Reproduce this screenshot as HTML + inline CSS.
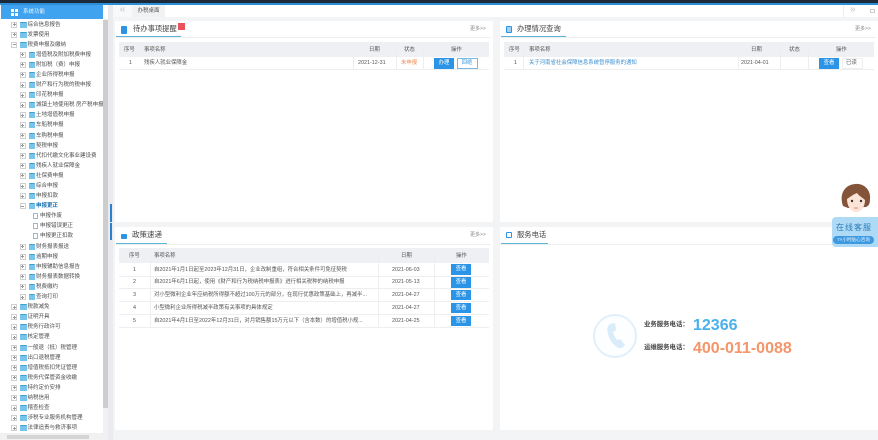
<!DOCTYPE html>
<html lang="zh" style="background:#f3f4f5"><head><meta charset="utf-8"><title>办税桌面</title>
<style>
*{box-sizing:border-box}
html,body{margin:0;padding:0;width:878px;height:440px;overflow:hidden;background:#f3f4f5;font-family:"Liberation Sans","Noto Sans CJK SC",sans-serif;color:#555}
#w{position:absolute;left:0;top:0;width:878px;height:440px;overflow:hidden;filter:blur(.25px)}
.a{position:absolute}
#tree{position:absolute;left:0;top:19.5px;width:103px;height:413px;background:#fff;overflow:hidden}
.r{position:relative;height:10.1px;font-size:5.5px;line-height:10.1px;white-space:nowrap;color:#4d4d4d}
.r i{position:absolute;top:2px;width:6px;height:6px;border:1px solid #cfcfcf;background:#fff}
.r i:after{content:"";position:absolute;left:.5px;top:1.5px;width:3px;height:1px;background:#999}
.r i:before{content:"";position:absolute;left:1.5px;top:.5px;width:1px;height:3px;background:#999}
.r.o i:before{display:none}
.r b{position:absolute;top:2px;width:6.5px;height:6px;background:#78c4ea;border-radius:1px 1px 0 0;border-top:1px solid #3f9fd2}
.r u{position:absolute;top:2px;width:5px;height:6px;border:1px solid #9fb6cc;background:#fff}
.r span{position:absolute;top:0}
.l1 i{left:11px}.l1 b{left:20px}.l1 span{left:27.5px}
.l2 i{left:19.5px}.l2 b{left:28.5px}.l2 span{left:36px}
.l3 u{left:33px}.l3 span{left:40px}
.panel{position:absolute;background:#fff}
.t{position:absolute;font-size:7.3px;line-height:10px;color:#444;white-space:nowrap}
.ul{position:absolute;height:1.5px;background:#5db4d8}
.more{position:absolute;font-size:5px;color:#888;line-height:8px}
.hd{position:absolute;background:#eef0f3}
.c{position:absolute;font-size:5.4px;line-height:8px;color:#555;white-space:nowrap}
.ln{position:absolute;background:#eceef0}
.btn{position:absolute;font-size:5.4px;color:#fff;background:#2b94e6;text-align:center;height:10.5px;line-height:10.5px;width:20px}
.ico{position:absolute;width:6px;height:7px;border-radius:1px;background:#2b94e6}
</style></head><body><div id="w">
<div class="a" style="left:0;top:0;width:878px;height:3px;background:#1d2a3a"></div>
<div class="a" style="left:0;top:3px;width:878px;height:1.5px;background:#2a8fd6"></div>

<div class="a" style="left:113px;top:4.5px;width:765px;height:12.5px;background:#fff"></div>
<div class="a" style="left:113px;top:4.5px;width:19px;height:12.5px;background:#f8f9fa;font-size:10px;color:#c4c4c4;text-align:center;line-height:10px">«</div>
<div class="a" style="left:132px;top:4.5px;width:33px;height:12.5px;background:#f1f2f3;font-size:5.5px;color:#555;text-align:center;line-height:12.5px">办税桌面</div>
<div class="a" style="left:843px;top:4.5px;width:1px;height:12.5px;background:#eee"></div>
<div class="a" style="left:850px;top:4.5px;font-size:10px;color:#c4c4c4;line-height:10px">»</div>
<div class="a" style="left:870px;top:9px;width:5px;height:4px;border:1px solid #ccc"></div>

<!-- sidebar -->
<div class="a" style="left:0;top:4.5px;width:108px;height:436px;background:#fff"></div>
<div class="a" style="left:1px;top:5px;width:102px;height:14px;background:#3fa3f0"></div>
<div class="a" style="left:11px;top:8.5px;width:3px;height:3px;background:#fff"></div>
<div class="a" style="left:15px;top:8.5px;width:3px;height:3px;background:#fff"></div>
<div class="a" style="left:11px;top:12.5px;width:3px;height:3px;background:#fff"></div>
<div class="a" style="left:15px;top:12.5px;width:3px;height:3px;background:#fff"></div>
<div class="a" style="left:23px;top:7px;font-size:5.5px;line-height:10px;color:#e8f4fd">系统功能</div>
<div id="tree">
<div class="r l1"><i></i><b></b><span>综合信息报告</span></div>
<div class="r l1"><i></i><b></b><span>发票使用</span></div>
<div class="r l1 o"><i></i><b></b><span>税费申报及缴纳</span></div>
<div class="r l2"><i></i><b></b><span>增值税及附加税费申报</span></div>
<div class="r l2"><i></i><b></b><span>附加税（费）申报</span></div>
<div class="r l2"><i></i><b></b><span>企业所得税申报</span></div>
<div class="r l2"><i></i><b></b><span>财产和行为税的税申报</span></div>
<div class="r l2"><i></i><b></b><span>印花税申报</span></div>
<div class="r l2"><i></i><b></b><span>城镇土地使用税 房产税申报</span></div>
<div class="r l2"><i></i><b></b><span>土地增值税申报</span></div>
<div class="r l2"><i></i><b></b><span>车船税申报</span></div>
<div class="r l2"><i></i><b></b><span>车购税申报</span></div>
<div class="r l2"><i></i><b></b><span>契税申报</span></div>
<div class="r l2"><i></i><b></b><span>代扣代缴文化事业建设费</span></div>
<div class="r l2"><i></i><b></b><span>残疾人就业保障金</span></div>
<div class="r l2"><i></i><b></b><span>社保费申报</span></div>
<div class="r l2"><i></i><b></b><span>综合申报</span></div>
<div class="r l2"><i></i><b></b><span>申报扣款</span></div>
<div class="r l2 o"><i></i><b></b><span style="color:#1a6fb0;font-weight:bold">申报更正</span></div>
<div class="r l3"><u></u><span>申报作废</span></div>
<div class="r l3"><u></u><span>申报错误更正</span></div>
<div class="r l3"><u></u><span>申报更正扣款</span></div>
<div class="r l2"><i></i><b></b><span>财务报表报送</span></div>
<div class="r l2"><i></i><b></b><span>逾期申报</span></div>
<div class="r l2"><i></i><b></b><span>申报辅助信息报告</span></div>
<div class="r l2"><i></i><b></b><span>财务报表数据转换</span></div>
<div class="r l2"><i></i><b></b><span>税费缴约</span></div>
<div class="r l2"><i></i><b></b><span>查询打印</span></div>
<div class="r l1"><i></i><b></b><span>税款减免</span></div>
<div class="r l1"><i></i><b></b><span>证明开具</span></div>
<div class="r l1"><i></i><b></b><span>税务行政许可</span></div>
<div class="r l1"><i></i><b></b><span>核定管理</span></div>
<div class="r l1"><i></i><b></b><span>一般退（抵）税管理</span></div>
<div class="r l1"><i></i><b></b><span>出口退税管理</span></div>
<div class="r l1"><i></i><b></b><span>增值税抵扣凭证管理</span></div>
<div class="r l1"><i></i><b></b><span>税务代保管资金收缴</span></div>
<div class="r l1"><i></i><b></b><span>特约定价安排</span></div>
<div class="r l1"><i></i><b></b><span>纳税信用</span></div>
<div class="r l1"><i></i><b></b><span>稽查检查</span></div>
<div class="r l1"><i></i><b></b><span>涉税专业服务机构管理</span></div>
<div class="r l1"><i></i><b></b><span>法律追责与救济事项</span></div>
</div>
<div class="a" style="left:103px;top:19px;width:5px;height:414px;background:#f1f1f1"></div>
<div class="a" style="left:103px;top:20px;width:5px;height:388px;background:#cdcdcd"></div>
<div class="a" style="left:0;top:433px;width:108px;height:7px;background:#f1f1f1"></div>
<div class="a" style="left:7px;top:434.5px;width:82px;height:4px;background:#d4d4d4"></div>
<div class="a" style="left:108px;top:4.5px;width:5px;height:436px;background:#e9ebee"></div>
<div class="a" style="left:110px;top:204px;width:2px;height:18px;background:#2b7fd0"></div>
<div class="a" style="left:110px;top:223px;width:2px;height:17px;background:#2b7fd0"></div>

<!-- panel 1 -->
<div class="panel" style="left:115px;top:21px;width:378px;height:201px"></div>
<div class="ico" style="left:121px;top:26px;height:8px"></div>
<div class="t" style="left:133px;top:24px">待办事项提醒</div>
<div class="a" style="left:178px;top:23px;width:7px;height:7px;background:#e8525a"></div>
<div class="ul" style="left:116px;top:36px;width:65px"></div>
<div class="a" style="left:116px;top:37px;width:375px;height:.5px;background:#eee"></div>
<div class="more" style="left:470px;top:25px">更多&gt;&gt;</div>
<div class="hd" style="left:119px;top:42px;width:370px;height:15px"></div>
<div class="ln" style="left:119px;top:69px;width:370px;height:1px"></div>
<div class="ln" style="left:353px;top:42px;width:1px;height:27px"></div>
<div class="ln" style="left:396px;top:42px;width:1px;height:27px"></div>
<div class="ln" style="left:423px;top:42px;width:1px;height:27px"></div>
<div class="c" style="left:124px;top:46px">序号</div>
<div class="c" style="left:144px;top:46px">事项名称</div>
<div class="c" style="left:369px;top:46px">日期</div>
<div class="c" style="left:404px;top:46px">状态</div>
<div class="c" style="left:451px;top:46px">操作</div>
<div class="c" style="left:129px;top:59px">1</div>
<div class="c" style="left:144px;top:59px">残疾人就业保障金</div>
<div class="c" style="left:358px;top:59px">2021-12-31</div>
<div class="c" style="left:401px;top:59px;color:#ef8a4c">未申报</div>
<div class="btn" style="left:434px;top:58px">办理</div>
<div class="btn" style="left:456.5px;top:57.5px;width:21px;height:11.5px;background:#fff;border:1px solid #7cb9df;color:#3b9ae0;line-height:9.5px">回绝</div>

<!-- panel 2 -->
<div class="panel" style="left:500px;top:21px;width:378px;height:201px"></div>
<div class="ico" style="left:506px;top:26px;height:7px;border:1.5px solid #2b94e6;background:#9fd2f2"></div>
<div class="t" style="left:517px;top:24px">办理情况查询</div>
<div class="ul" style="left:501px;top:36px;width:65px"></div>
<div class="a" style="left:501px;top:37px;width:375px;height:.5px;background:#eee"></div>
<div class="more" style="left:855px;top:25px">更多&gt;&gt;</div>
<div class="hd" style="left:504px;top:42px;width:370px;height:15px"></div>
<div class="ln" style="left:504px;top:69px;width:370px;height:1px"></div>
<div class="ln" style="left:523px;top:42px;width:1px;height:27px"></div>
<div class="ln" style="left:738px;top:42px;width:1px;height:27px"></div>
<div class="ln" style="left:780px;top:42px;width:1px;height:27px"></div>
<div class="ln" style="left:808px;top:42px;width:1px;height:27px"></div>
<div class="c" style="left:509px;top:46px">序号</div>
<div class="c" style="left:529px;top:46px">事项名称</div>
<div class="c" style="left:751px;top:46px">日期</div>
<div class="c" style="left:789px;top:46px">状态</div>
<div class="c" style="left:836px;top:46px">操作</div>
<div class="c" style="left:514px;top:59px">1</div>
<div class="c" style="left:529px;top:59px;color:#3d8fd0">关于河南省社会保障信息系统暂停服务的通知</div>
<div class="c" style="left:741px;top:59px">2021-04-01</div>
<div class="btn" style="left:819px;top:58px">查看</div>
<div class="c" style="left:846px;top:59px">已读</div>
<div class="a" style="left:842px;top:58px;width:21px;height:11px;border:1px solid #eee"></div>

<!-- panel 3 -->
<div class="panel" style="left:115px;top:227px;width:378px;height:203px"></div>
<div class="a" style="left:121px;top:234px;width:6px;height:5px;background:#2b94e6;border-radius:1px"></div>
<div class="t" style="left:132px;top:230px;font-size:7.5px">政策速递</div>
<div class="ul" style="left:116px;top:242.5px;width:51px"></div>
<div class="a" style="left:116px;top:243.5px;width:375px;height:.5px;background:#eee"></div>
<div class="more" style="left:470px;top:231px">更多&gt;&gt;</div>
<div class="hd" style="left:119px;top:248px;width:370px;height:15px"></div>
<div class="ln" style="left:150px;top:248px;width:1px;height:79px"></div>
<div class="ln" style="left:378px;top:248px;width:1px;height:79px"></div>
<div class="ln" style="left:434px;top:248px;width:1px;height:79px"></div>
<div class="ln" style="left:119px;top:275.5px;width:370px;height:1px"></div>
<div class="ln" style="left:119px;top:288.3px;width:370px;height:1px"></div>
<div class="ln" style="left:119px;top:301.1px;width:370px;height:1px"></div>
<div class="ln" style="left:119px;top:314px;width:370px;height:1px"></div>
<div class="ln" style="left:119px;top:327px;width:370px;height:1px"></div>
<div class="c" style="left:129px;top:252px">序号</div>
<div class="c" style="left:154px;top:252px">事项名称</div>
<div class="c" style="left:401px;top:252px">日期</div>
<div class="c" style="left:456px;top:252px">操作</div>

<div class="c" style="left:133px;top:265.5px">1</div>
<div class="c" style="left:154px;top:265.5px">自2021年1月1日起至2023年12月31日，企业改制重组，符合相关条件可免征契税</div>
<div class="c" style="left:392px;top:265.5px">2021-06-03</div>
<div class="btn" style="left:451px;top:264px">查看</div>

<div class="c" style="left:133px;top:278.3px">2</div>
<div class="c" style="left:154px;top:278.3px">自2021年6月1日起，使用《财产和行为税纳税申报表》进行相关税种的纳税申报</div>
<div class="c" style="left:392px;top:278.3px">2021-05-13</div>
<div class="btn" style="left:451px;top:277px">查看</div>

<div class="c" style="left:133px;top:291px">3</div>
<div class="c" style="left:154px;top:291px">对小型微利企业年应纳税所得额不超过100万元的部分，在现行优惠政策基础上，再减半...</div>
<div class="c" style="left:392px;top:291px">2021-04-27</div>
<div class="btn" style="left:451px;top:289.5px">查看</div>

<div class="c" style="left:133px;top:304px">4</div>
<div class="c" style="left:154px;top:304px">小型微利企业所得税减半政策有关事项的具体规定</div>
<div class="c" style="left:392px;top:304px">2021-04-27</div>
<div class="btn" style="left:451px;top:302.5px">查看</div>

<div class="c" style="left:133px;top:316.5px">5</div>
<div class="c" style="left:154px;top:316.5px">自2021年4月1日至2022年12月31日，对月销售额15万元以下（含本数）的增值税小规...</div>
<div class="c" style="left:392px;top:316.5px">2021-04-25</div>
<div class="btn" style="left:451px;top:315.5px">查看</div>

<!-- panel 4 -->
<div class="panel" style="left:500px;top:227px;width:378px;height:203px"></div>
<div class="a" style="left:506px;top:232px;width:6px;height:6px;border:1.5px solid #2b94e6;border-radius:1px"></div>
<div class="t" style="left:517px;top:230px">服务电话</div>
<div class="ul" style="left:501px;top:242.5px;width:47px"></div>
<div class="a" style="left:501px;top:243.5px;width:375px;height:.5px;background:#eee"></div>
<svg class="a" style="left:592px;top:313px" width="46" height="46" viewBox="0 0 46 46"><circle cx="23" cy="23" r="21" fill="#fcfeff" stroke="#e2f0fa" stroke-width="2"/><path d="M18 11c-4 3-3 9 0 15s8 10 12 9l3-3-5-6-3 1c-2-2-3-5-4-8l3-2-1-7z" fill="#d8edf9"/></svg>
<div class="a" style="left:644px;top:320px;font-size:6.4px;line-height:9px;font-weight:bold;color:#444">业务服务电话：</div>
<div class="a" style="left:693px;top:317px;font-size:16px;line-height:18px;font-weight:bold;color:#4ab0ea">12366</div>
<div class="a" style="left:644px;top:343px;font-size:6.4px;line-height:9px;font-weight:bold;color:#444">运维服务电话：</div>
<div class="a" style="left:693px;top:340px;font-size:16px;line-height:18px;font-weight:bold;color:#f4956a;white-space:nowrap">400-011-0088</div>

<!-- widget -->
<svg class="a" style="left:840px;top:183px" width="32" height="34" viewBox="0 0 32 34"><path d="M3 23C-1 12 4 2 15 1c9-1 16 6 15 15 0 6-2 7-4 8l-18 1z" fill="#84543a"/><path d="M7 16c3-2 7-5 10-6 2 3 6 5 8 7 0 7-4 12-9 12S7 23 7 16z" fill="#fbe3d6"/><circle cx="12" cy="18" r="1.2" fill="#333"/><circle cx="21" cy="18" r="1.2" fill="#333"/><path d="M14 25h4" stroke="#d88" stroke-width="1"/><path d="M8 34l3-5h10l3 5z" fill="#fff"/></svg>
<div class="a" style="left:832px;top:217px;width:46px;height:30px;background:#aedaf6;border-radius:4px 0 0 4px"></div>
<div class="a" style="left:836px;top:222px;font-size:8px;line-height:12px;color:#2a7cb8;letter-spacing:1px;white-space:nowrap">在线客服</div>
<div class="a" style="left:833px;top:236px;width:41px;height:8px;background:#3d9ae0;border-radius:4px;color:#eaf6ff;font-size:4.6px;line-height:8px;text-align:center;white-space:nowrap">7×小时贴心咨询</div>
</div></body></html>
